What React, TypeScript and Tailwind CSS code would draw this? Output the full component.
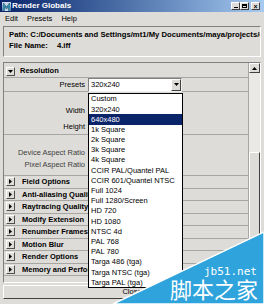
import React from 'react';

const presets = [
  'Custom',
  '320x240',
  '640x480',
  '1k Square',
  '2k Square',
  '3k Square',
  '4k Square',
  'CCIR PAL/Quantel PAL',
  'CCIR 601/Quantel NTSC',
  'Full 1024',
  'Full 1280/Screen',
  'HD 720',
  'HD 1080',
  'NTSC 4d',
  'PAL 768',
  'PAL 780',
  'Targa 486 (tga)',
  'Targa NTSC (tga)',
  'Targa PAL (tga)',
];

const sections = [
  'Field Options',
  'Anti-aliasing Quality',
  'Raytracing Quality',
  'Modify Extension',
  'Renumber Frames',
  'Motion Blur',
  'Render Options',
  'Memory and Performance Options',
];

function Arrow({ down }: { down?: boolean }) {
  return (
    <span className="w-[9px] h-[9px] shrink-0 flex items-center justify-center bg-[#dedcd8] border border-t-white border-l-white border-r-[#505050] border-b-[#505050]">
      <svg width="5" height="5" viewBox="0 0 5 5">
        {down ? (
          <polygon points="0,1 5,1 2.5,4" fill="#000" />
        ) : (
          <polygon points="1,0 4,2.5 1,5" fill="#000" />
        )}
      </svg>
    </span>
  );
}

function WinButton({ children }: { children: React.ReactNode }) {
  return (
    <span className="w-[9px] h-[8px] flex items-center justify-center bg-[#dedcd8] border border-t-white border-l-white border-r-[#404040] border-b-[#404040] text-[7px] leading-none font-bold text-black">
      {children}
    </span>
  );
}

export default function App() {
  return (
    <div className="relative w-[264px] h-[304px] overflow-hidden bg-[#dedcd8] text-black font-['Liberation_Sans',Arial,sans-serif] text-[7.5px] leading-none">
      {/* title bar */}
      <div className="h-[12px] flex items-center px-[2px] bg-linear-to-r from-[#0a246a] to-[#a6caf0]">
        <svg width="9" height="9" viewBox="0 0 9 9" className="shrink-0">
          <rect width="9" height="9" fill="#c8d8e8" />
          <path d="M0.5 8.5 L1.5 1 L4.5 5 L7.5 1 L8.5 8.5 L6.5 8.5 L6 4.5 L4.5 7 L3 4.5 L2.5 8.5 Z" fill="#3a9fc0" stroke="#1b4a6a" strokeWidth="0.6" />
        </svg>
        <span className="ml-[1px] text-white font-bold text-[8px]">Render Globals</span>
        <div className="ml-auto flex items-center mr-[2px]">
          <WinButton>
            <span className="block w-[4px] h-[1px] bg-black mt-[3px]" />
          </WinButton>
          <WinButton>
            <span className="block w-[5px] h-[4px] border border-black border-t-2" />
          </WinButton>
          <span className="w-[2px]" />
          <WinButton>×</WinButton>
        </div>
      </div>

      {/* menu bar */}
      <div className="h-[14px] flex items-center pl-[5px] gap-[9px] text-[7.5px]">
        <span>Edit</span>
        <span>Presets</span>
        <span>Help</span>
      </div>

      {/* info */}
      <div className="mx-[3px] h-[31px] border border-t-[#808080] border-l-[#808080] border-r-white border-b-white pl-[5px] pt-[4px] flex flex-col gap-[3px] font-bold text-[7.7px] whitespace-nowrap overflow-hidden">
        <span>Path: C:/Documents and Settings/mt1/My Documents/maya/projects/c</span>
        <span>
          File Name:<span className="ml-[9px]">4.iff</span>
        </span>
      </div>

      {/* scroll panel */}
      <div className="mx-[3px] mt-[5px] h-[221px] flex border border-t-[#808080] border-l-[#808080] border-r-white border-b-white">
        <div className="flex-1 flex flex-col border-r border-[#a8a6a2]">
          {/* resolution header */}
          <div className="h-[15px] pt-[2px] flex items-center pl-[2px] border-b border-[#a8a6a2]">
            <Arrow down />
            <span className="ml-[5px] font-bold text-[7.5px]">Resolution</span>
          </div>
          {/* presets row */}
          <div className="h-[14px] flex items-center border-b border-[#a8a6a2]">
            <span className="w-[84px] text-right pr-[3px]">Presets</span>
            <div className="w-[94px] h-[14px] flex items-center bg-white border border-t-[#808080] border-l-[#808080] border-r-[#f0f0f0] border-b-[#f0f0f0]">
              <span className="flex-1 pl-[2px]">320x240</span>
              <span className="w-[10px] h-[12px] flex items-center justify-center bg-[#dedcd8] border border-t-white border-l-white border-r-[#404040] border-b-[#404040]">
                <svg width="5" height="3" viewBox="0 0 5 3">
                  <polygon points="0,0 5,0 2.5,3" fill="#000" />
                </svg>
              </span>
            </div>
          </div>
          {/* width / height group */}
          <div className="h-[43px] flex flex-col border-b border-[#a8a6a2] pt-[15px] gap-[8px]">
            <span className="w-[84px] text-right pr-[3px]">Width</span>
            <span className="w-[84px] text-right pr-[3px]">Height</span>
          </div>
          {/* aspect group */}
          <div className="h-[41px] flex flex-col border-b border-[#a8a6a2] pt-[14px] gap-[4px]">
            <span className="w-[84px] text-right pr-[3px] text-[#404040]">Device Aspect Ratio</span>
            <span className="w-[84px] text-right pr-[3px] text-[#404040]">Pixel Aspect Ratio</span>
          </div>
          {/* collapsed sections */}
          {sections.map((s) => (
            <div
              key={s}
              className="h-[12.5px] flex items-center pl-[2px] border-b border-[#a8a6a2] whitespace-nowrap overflow-hidden"
            >
              <Arrow />
              <span className="ml-[7px] font-bold text-[7.5px]">{s}</span>
            </div>
          ))}
        </div>
        {/* scrollbar */}
        <div className="w-[11px] flex flex-col bg-[#ebe9e5]">
          <span className="h-[10px] flex items-center justify-center bg-[#dedcd8] border border-t-white border-l-white border-r-[#404040] border-b-[#404040]">
            <svg width="5" height="3" viewBox="0 0 5 3">
              <polygon points="0,3 5,3 2.5,0" fill="#000" />
            </svg>
          </span>
          <span className="h-[79px]" />
          <span className="flex-1 bg-[#dedcd8] border border-t-white border-l-white border-r-[#404040] border-b-[#404040]" />
          <span className="h-[10px] flex items-center justify-center bg-[#dedcd8] border border-t-white border-l-white border-r-[#404040] border-b-[#404040]">
            <svg width="5" height="3" viewBox="0 0 5 3">
              <polygon points="0,0 5,0 2.5,3" fill="#000" />
            </svg>
          </span>
        </div>
      </div>

      {/* close button */}
      <div className="mx-[3px] mt-[2px] h-[14px] flex items-center justify-center border border-t-white border-l-white border-r-[#404040] border-b-[#404040]">
        Close
      </div>

      {/* open preset list */}
      <div className="absolute left-[88px] top-[93px] w-[95px] h-[195px] bg-white border border-black overflow-hidden whitespace-nowrap">
        {presets.map((p) => (
          <div
            key={p}
            className={
              p === '640x480'
                ? 'h-[10.2px] flex items-center pl-[2px] bg-[#0a246a] text-white'
                : 'h-[10.2px] flex items-center pl-[2px]'
            }
          >
            {p}
          </div>
        ))}
      </div>

      {/* watermark */}
      <svg className="absolute left-0 top-0" width="264" height="304" viewBox="0 0 264 304">
        <polygon points="113,304 264,232 264,304" fill="#2ea3dc" stroke="#ffffff" strokeWidth="1.5" />
      </svg>
      <span className="absolute left-[204px] top-[266px] text-white text-[11px] font-['DejaVu_Sans_Mono',monospace]">jb51.net</span>
      <span className="absolute left-[170px] top-[277px] text-white text-[22px] leading-none font-['Noto_Sans_CJK_SC',sans-serif]">脚本之家</span>
    </div>
  );
}
